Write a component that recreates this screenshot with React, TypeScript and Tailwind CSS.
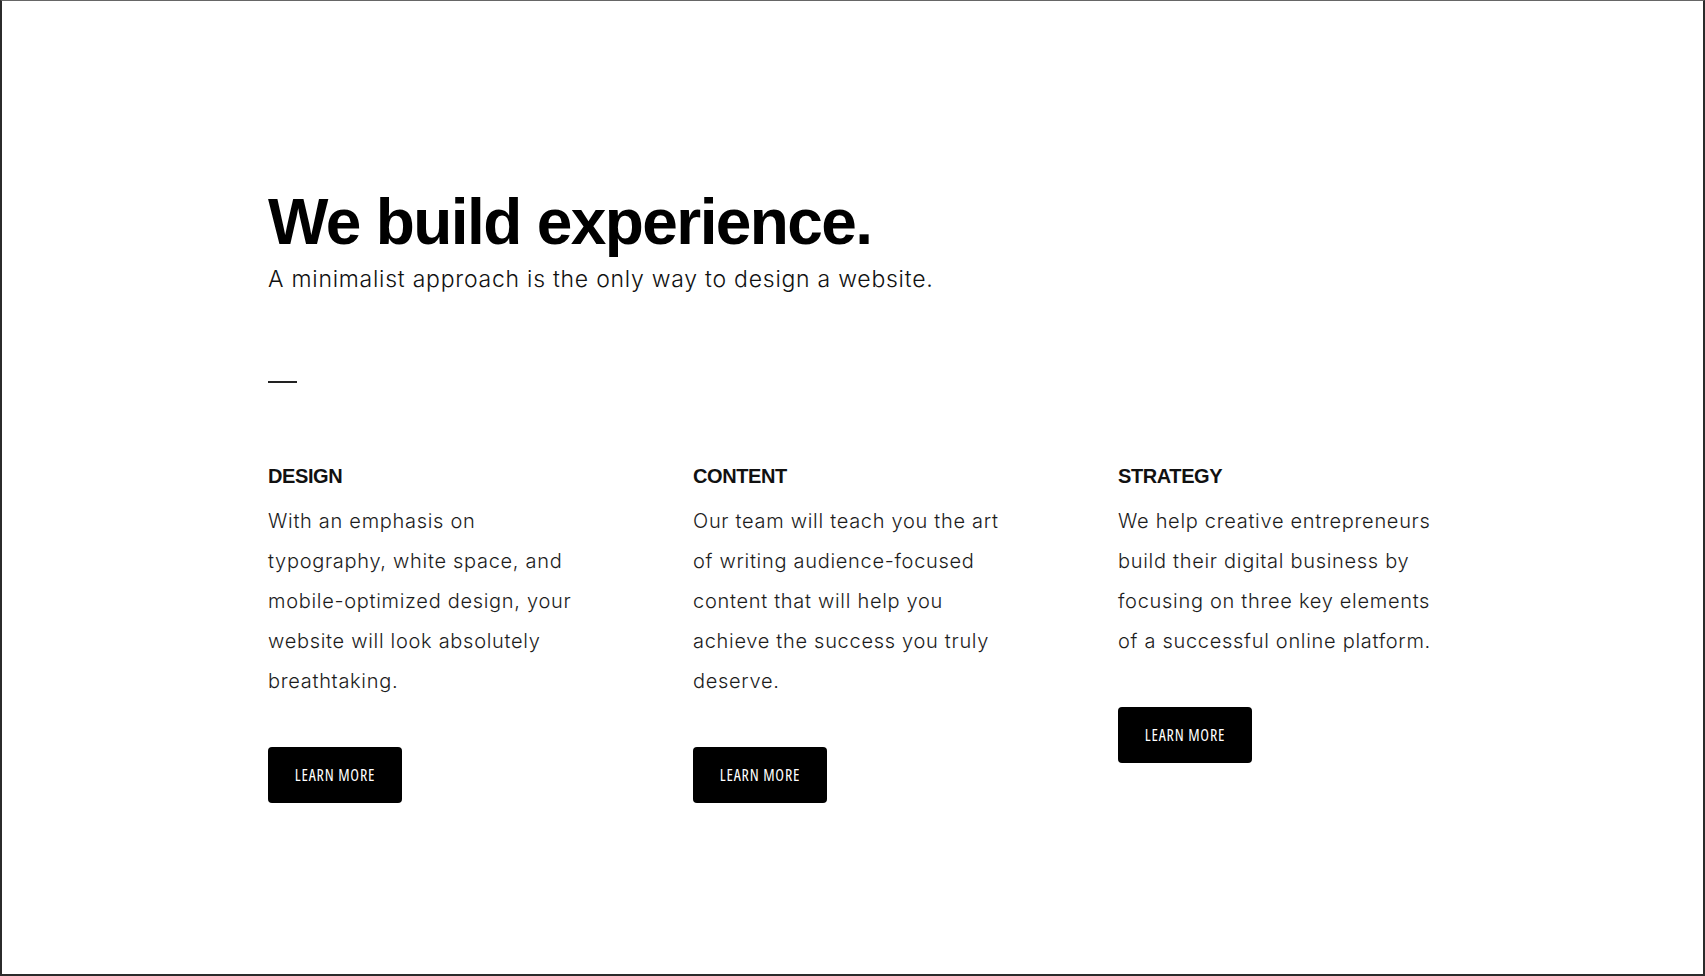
const columns = [
  {
    title: "DESIGN",
    lines: [
      "With an emphasis on",
      "typography, white space, and",
      "mobile-optimized design, your",
      "website will look absolutely",
      "breathtaking.",
    ],
  },
  {
    title: "CONTENT",
    lines: [
      "Our team will teach you the art",
      "of writing audience-focused",
      "content that will help you",
      "achieve the success you truly",
      "deserve.",
    ],
  },
  {
    title: "STRATEGY",
    lines: [
      "We help creative entrepreneurs",
      "build their digital business by",
      "focusing on three key elements",
      "of a successful online platform.",
    ],
  },
];

function Column({ title, lines }: { title: string; lines: string[] }) {
  return (
    <div className="flex flex-col items-start">
      <h3 className="font-['Liberation_Sans',Arial,sans-serif] text-[20px] leading-[24px] font-bold tracking-[-0.4px] text-[#111]">
        {title}
      </h3>
      <p className="mt-[13px] font-['Inter',sans-serif] font-light text-[20px] leading-[40px] text-[#1c1c1c] tracking-[0.7px]">
        {lines.map((l) => (
          <span key={l} className="block whitespace-nowrap">
            {l}
          </span>
        ))}
      </p>
      <button className="mt-[46px] w-[134px] h-[56px] rounded-[4px] bg-black text-white font-['Open_Sans','DejaVu_Sans_Condensed',sans-serif] [font-stretch:75%] font-medium text-[16px] tracking-[0.8px]">
        LEARN MORE
      </button>
    </div>
  );
}

export default function App() {
  return (
    <div className="h-[976px] w-full bg-white border-2 border-t border-[#2b2b2b] border-t-[#666] overflow-hidden">
      <div className="ml-[266px] pt-[189px]">
        <h1 className="font-['Liberation_Sans',Arial,sans-serif] font-bold text-[64px] leading-[64px] tracking-[-1.6px] text-black">
          We build experience.
        </h1>
        <p className="mt-[12px] font-['Inter',sans-serif] font-light text-[23px] leading-[26px] text-[#111] tracking-[0.75px]">
          A minimalist approach is the only way to design a website.
        </p>

        <div className="mt-[89px] w-[29px] h-[2px] bg-[#222]" />

        <div className="mt-[81px] grid grid-cols-[425px_425px_425px]">
          {columns.map((c) => (
            <Column key={c.title} title={c.title} lines={c.lines} />
          ))}
        </div>
      </div>
    </div>
  );
}
